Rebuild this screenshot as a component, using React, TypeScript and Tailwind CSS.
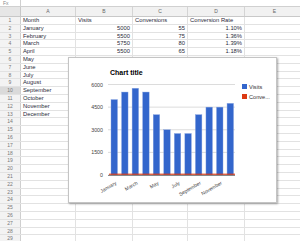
import React from "react";

const cols = [
	{ key: "A", w: "w-[55px]" },
	{ key: "B", w: "w-[57px]" },
	{ key: "C", w: "w-[55px]" },
	{ key: "D", w: "w-[57px]" },
	{ key: "E", w: "w-[60px]" },
];

const months = [
	"January",
	"February",
	"March",
	"April",
	"May",
	"June",
	"July",
	"August",
	"September",
	"October",
	"November",
	"December",
];

const table: string[][] = [
	["Month", "Visits", "Conversions", "Conversion Rate"],
	["January", "5000", "55", "1.10%"],
	["February", "5500", "75", "1.36%"],
	["March", "5750", "80", "1.39%"],
	["April", "5500", "65", "1.18%"],
	...months.slice(4).map((m) => [m]),
];

const visits = [5000, 5500, 5750, 5500, 4000, 3000, 2750, 2750, 4000, 4500, 4500, 4750];

function Chart() {
	const base = 118;
	const span = 90.5;
	const grid = [0, 1, 2, 3, 4].map((i) => base - (span / 4) * i);
	const labels = ["0", "1500", "3000", "4500", "6000"];
	return (
		<div className="absolute left-[68px] top-[57px] w-[209px] h-[146px] bg-white border border-[#c4c4c4] shadow-[1px_1px_2px_rgba(0,0,0,0.35)]">
			<svg width="209" height="146" className="absolute -left-px -top-px" style={{ fontFamily: '"Liberation Sans", Arial, sans-serif' }}>
				<text x="42" y="18" fontSize="7" fontWeight="bold" fill="#000">
					Chart title
				</text>
				{grid.map((y, i) => (
					<g key={i}>
						<line x1="40" x2="167" y1={y} y2={y} stroke="#dcdcdc" strokeWidth="1" />
						<text x="35" y={y + 2} fontSize="5.3" fill="#444" textAnchor="end">
							{labels[i]}
						</text>
					</g>
				))}
				{visits.map((v, i) => {
					const h = (v / 6000) * span;
					const x = 43 + i * 10.55;
					return <rect key={i} x={x} y={base - h} width="6.5" height={h} fill="#3366cc" stroke="#8aa6e0" strokeWidth="0.4" />;
				})}
				<rect x="41" y="116.6" width="126" height="1.3" fill="#dc3912" opacity="0.85" />
				<line x1="40" x2="167" y1="118.5" y2="118.5" stroke="#888" strokeWidth="1" />
				{months.map((m, i) =>
					i % 2 === 0 ? (
						<text
							key={m}
							x={43 + i * 10.55 + 6}
							y="127"
							fontSize="5"
							fill="#444"
							textAnchor="end"
							transform={`rotate(-30 ${43 + i * 10.55 + 6} 127)`}
						>
							{m}
						</text>
					) : null,
				)}
				<rect x="174" y="27" width="5" height="5" fill="#3366cc" />
				<text x="181" y="31.5" fontSize="5.6" fill="#333">
					Visits
				</text>
				<rect x="174" y="37" width="5" height="5" fill="#dc3912" />
				<text x="181" y="41.5" fontSize="5.6" fill="#333">
					Conve...
				</text>
			</svg>
		</div>
	);
}

export default function App() {
	return (
		<div className="relative w-[300px] h-[241px] overflow-hidden bg-white font-['Liberation_Sans',Arial,sans-serif]">
			<div className="flex h-[7px] border-b border-[#d0d0d0]">
				<div className="w-[21px] border-r border-[#d0d0d0] text-[5px] leading-[6px] text-[#888] pl-[3px]">Fx</div>
			</div>
			<div className="flex h-[10px] bg-[#f1f1f1] border-b border-[#c8c8c8]">
				<div className="w-[21px] shrink-0 border-r border-[#c8c8c8] bg-[#e6e6e6]" />
				{cols.map((c) => (
					<div key={c.key} className={`${c.w} shrink-0 border-r border-[#d4d4d4] text-center text-[5px] leading-[9px] text-[#666]`}>
						{c.key}
					</div>
				))}
			</div>
			{Array.from({ length: 29 }, (_, r) => {
				const row = table[r] || [];
				return (
					<div key={r} className="flex h-[7.8px] border-b border-[#e2e2e2]">
						<div
							className={`w-[21px] shrink-0 border-r border-[#cfcfcf] text-center text-[5px] leading-[7px] text-[#777] ${
								r === 9 ? "bg-[#dadada]" : "bg-[#f3f3f3]"
							}`}
						>
							{r + 1}
						</div>
						{cols.map((c, ci) => (
							<div
								key={c.key}
								className={`${c.w} shrink-0 border-r border-[#e2e2e2] text-[5.8px] leading-[7px] text-[#2a2a3a] px-[2px] whitespace-nowrap overflow-hidden ${
									ci > 0 && r > 0 ? "text-right" : "text-left"
								}`}
							>
								{row[ci] || ""}
							</div>
						))}
					</div>
				);
			})}
			<Chart />
		</div>
	);
}
